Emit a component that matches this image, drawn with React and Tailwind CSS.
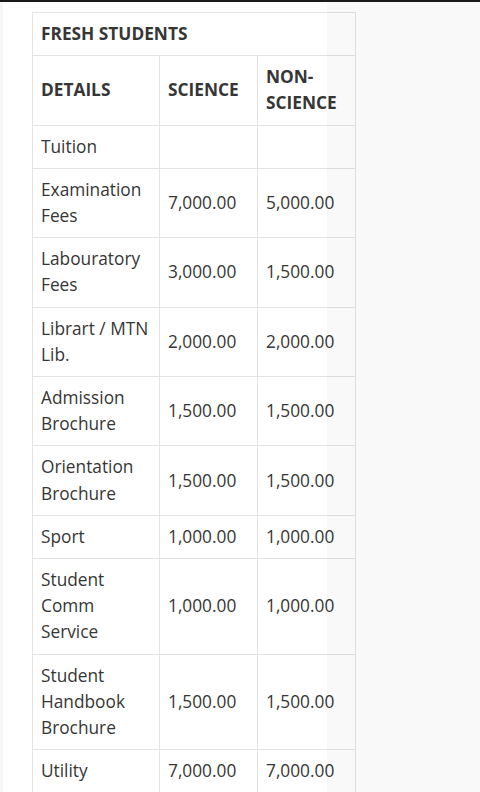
import React from 'react';

const rows = [
  ["Tuition", "", ""],
  ["Examination Fees", "7,000.00", "5,000.00"],
  ["Labouratory Fees", "3,000.00", "1,500.00"],
  ["Librart / MTN Lib.", "2,000.00", "2,000.00"],
  ["Admission Brochure", "1,500.00", "1,500.00"],
  ["Orientation Brochure", "1,500.00", "1,500.00"],
  ["Sport", "1,000.00", "1,000.00"],
  ["Student Comm Service", "1,000.00", "1,000.00"],
  ["Student Handbook Brochure", "1,500.00", "1,500.00"],
  ["Utility", "7,000.00", "7,000.00"],
];

const cell = "border border-[#e3e3e3] px-2 py-2 align-middle";

export default function App() {
  return (
    <div className="relative h-[792px] overflow-hidden bg-white border-t-2 border-[#1a1a1a] text-[#363636] text-[17.3px] leading-[26.2px]" style={{ fontFamily: '"Open Sans", sans-serif' }}>
      <div className="pl-8 pt-[10px]">
        <table className="border-collapse table-fixed w-[323px]">
          <colgroup>
            <col className="w-[127px]" />
            <col className="w-[98px]" />
            <col className="w-[98px]" />
          </colgroup>
          <tbody>
            <tr>
              <th colSpan={3} className={cell + " text-left font-bold"}>FRESH STUDENTS</th>
            </tr>
            <tr>
              <th className={cell + " text-left font-bold"}>DETAILS</th>
              <th className={cell + " text-left font-bold"}>SCIENCE</th>
              <th className={cell + " text-left font-bold"}>NON-SCIENCE</th>
            </tr>
            {rows.map((r, i) => (
              <tr key={i}>
                <td className={cell}>{r[0]}</td>
                <td className={cell}>{r[1]}</td>
                <td className={cell}>{r[2]}</td>
              </tr>
            ))}
          </tbody>
        </table>
      </div>
      <div className="absolute left-0 top-0 bottom-0 w-[3px] bg-black/[0.03]" />
      <div className="absolute left-[327px] right-0 top-0 bottom-0 bg-black/[0.025]" />
    </div>
  );
}
